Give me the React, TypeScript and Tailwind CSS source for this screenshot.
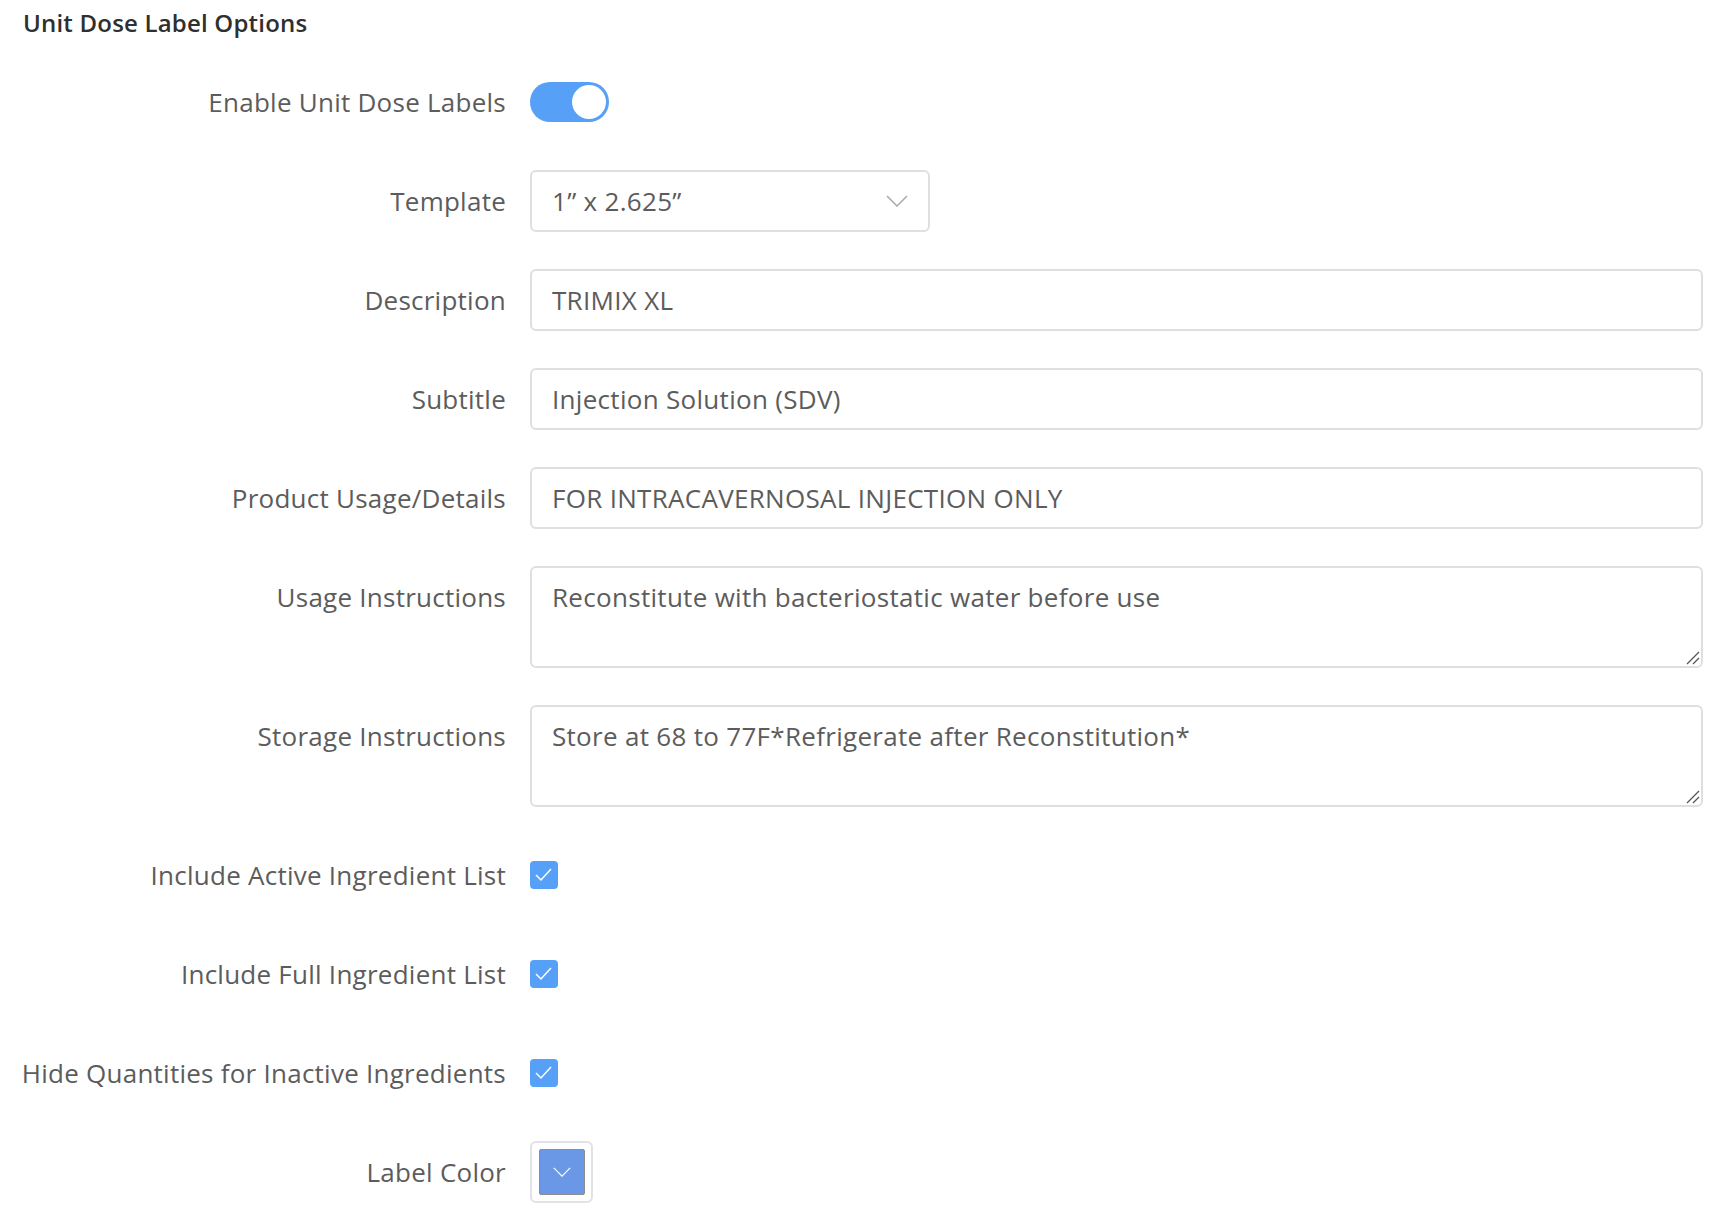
import React from "react";

const font = { fontFamily: "'Open Sans', 'Noto Sans', sans-serif" };

function Chevron({ className }: { className?: string }) {
  return (
    <svg width="22" height="12" viewBox="0 0 22 12" fill="none" className={className}>
      <polyline points="1,1 11,11 21,1" stroke="currentColor" strokeWidth="1.5" />
    </svg>
  );
}

function Check() {
  return (
    <div className="w-[28px] h-[28px] rounded-[4px] bg-[#57a0f8] flex items-center justify-center">
      <svg width="28" height="28" viewBox="0 0 28 28" fill="none">
        <polyline points="6,14 11,19 21,8" stroke="white" strokeWidth="1.5" />
      </svg>
    </div>
  );
}

function Row({ label, children }: { label: string; children: React.ReactNode }) {
  return (
    <div className="grid grid-cols-[483px_1fr] gap-x-[24px] items-start">
      <div className="h-[62px] flex items-center justify-end text-[26px] tracking-[0.25px] text-[#5c5c5c] whitespace-nowrap">
        {label}
      </div>
      <div className="min-h-[62px] flex items-center">{children}</div>
    </div>
  );
}

const inputCls =
  "w-full h-[62px] border-2 border-[#dfdfe3] rounded-[6px] px-[20px] text-[26px] tracking-[0.3px] text-[#5c5c5c] outline-none bg-white";

function TextArea({ value }: { value: string }) {
  return (
    <div className="relative w-full">
      <textarea
        className="w-full h-[102px] border-2 border-[#dfdfe3] rounded-[6px] px-[20px] pt-[11px] text-[26px] tracking-[0.3px] leading-[36px] text-[#5c5c5c] outline-none block resize-none"
        defaultValue={value}
      />
      {/* resize grip */}
      <svg
        width="14"
        height="14"
        viewBox="0 0 14 14"
        className="absolute right-[3px] bottom-[3px] pointer-events-none"
      >
        <line x1="1" y1="13" x2="13" y2="1" stroke="#555" strokeWidth="1.2" />
        <line x1="7" y1="13" x2="13" y2="7" stroke="#555" strokeWidth="1.2" />
      </svg>
    </div>
  );
}

export default function App() {
  return (
    <div className="min-h-screen bg-white pl-[23px] pr-[33px] pt-[8px] pb-[10px]" style={font}>
      <h2 className="text-[24px] tracking-[0.2px] leading-[29px] font-semibold text-[#2f2f2f]">Unit Dose Label Options</h2>

      <div className="mt-[34px] flex flex-col gap-[37px]">
        <Row label="Enable Unit Dose Labels">
          <div className="w-[79px] h-[40px] rounded-full bg-[#57a0f8] flex items-center justify-end pr-[3px]">
            <div className="w-[34px] h-[34px] rounded-full bg-white" />
          </div>
        </Row>

        <Row label="Template">
          <div className="w-[400px] h-[62px] border-2 border-[#dfdfe3] rounded-[6px] pl-[20px] pr-[20px] flex items-center justify-between text-[26px] tracking-[0.3px] text-[#5c5c5c]">
            <span>1” x 2.625”</span>
            <Chevron className="text-[#a9a9ad]" />
          </div>
        </Row>

        <Row label="Description">
          <input className={inputCls} defaultValue="TRIMIX XL" />
        </Row>

        <Row label="Subtitle">
          <input className={inputCls} defaultValue="Injection Solution (SDV)" />
        </Row>

        <Row label="Product Usage/Details">
          <input className={inputCls} defaultValue="FOR INTRACAVERNOSAL INJECTION ONLY" />
        </Row>

        <Row label="Usage Instructions">
          <TextArea value="Reconstitute with bacteriostatic water before use" />
        </Row>

        <Row label="Storage Instructions">
          <TextArea value="Store at 68 to 77F*Refrigerate after Reconstitution*" />
        </Row>

        <Row label="Include Active Ingredient List">
          <Check />
        </Row>

        <Row label="Include Full Ingredient List">
          <Check />
        </Row>

        <Row label="Hide Quantities for Inactive Ingredients">
          <Check />
        </Row>

        <Row label="Label Color">
          <div className="w-[63px] h-[62px] border-2 border-[#e2e2e6] rounded-[6px] flex items-center justify-center">
            <div className="w-[46px] h-[46px] bg-[#6a97e6] border border-[#8c8c8c] rounded-[2px] flex items-center justify-center">
              <Chevron className="text-white w-[18px] h-[10px]" />
            </div>
          </div>
        </Row>
      </div>
    </div>
  );
}
